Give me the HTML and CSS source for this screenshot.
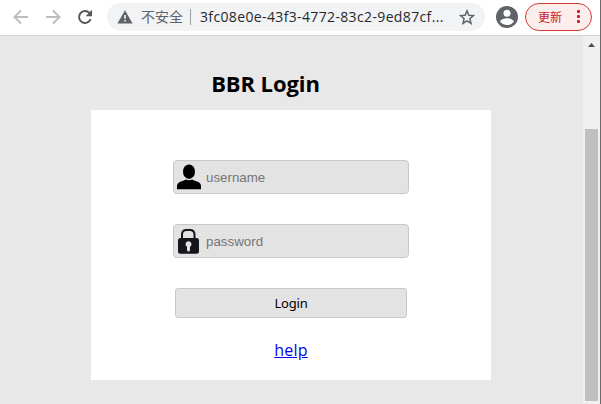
FILE: index.html
```html
<!DOCTYPE html>
<html lang="zh-CN">
<head>
<meta charset="utf-8">
<title>BBR Login</title>
<link rel="stylesheet" href="styles.css">
</head>
<body>
<div class="window">
  <header class="toolbar">
    <svg class="nav back" viewBox="0 0 16 16"><path d="M15 8H2M8 1.5 1.5 8 8 14.5"/></svg>
    <svg class="nav forward" viewBox="0 0 16 16"><path d="M1 8h13M8 1.5 14.5 8 8 14.5"/></svg>
    <svg class="nav reload" viewBox="0 0 16 16"><path d="M13.6 10.2A6 6 0 1 1 12.4 3.9L13.5 5"/><path class="tip" d="M15 .8v6.400H8.600z"/></svg>
    <div class="address">
      <svg class="warning" viewBox="0 0 16 14"><path d="M8 .3 15.6 13.5H.4z"/><path class="mark" d="M7.2 5h1.6v3.8H7.2zM7.2 10h1.6v1.6H7.2z"/></svg>
      <span class="insecure">不安全</span>
      <span class="divider"></span>
      <span class="url">3fc08e0e-43f3-4772-83c2-9ed87cf...</span>
      <svg class="star" viewBox="0 0 16 16"><path d="m8 1.8 1.8 4.4 4.7.4-3.6 3.1 1.1 4.6L8 11.8l-4 2.5 1.1-4.6-3.6-3.1 4.7-.4z"/></svg>
    </div>
    <svg class="avatar" viewBox="0 0 22 22"><circle class="disc" cx="11" cy="11" r="11"/><circle cx="11" cy="7.3" r="3.5"/><path d="M4 15.5c1-2.3 4.6-3.3 7-3.3s6 1 7 3.3c-1.6 2.2-4.2 3.6-7 3.6s-5.400-1.400-7-3.600z"/></svg>
    <div class="update"><span>更新</span><i class="dots"><b></b><b></b><b></b></i></div>
  </header>
  <div class="viewport">
    <main class="page">
      <h1>BBR Login</h1>
      <form class="card">
        <label class="field">
          <svg class="icon" viewBox="0 0 26 26"><ellipse cx="13" cy="7.700" rx="6" ry="7.200"/><path d="M1 25.300v-3.300c0-2.600 2-4 4.500-4.800 1.800-.5 3.200-1 4.300-1.700 2 1 4.400 1 6.400 0 1.100.7 2.500 1.200 4.300 1.700 2.500.8 4.500 2.200 4.500 4.800v3.300z"/></svg>
          <input type="text" placeholder="username">
        </label>
        <label class="field">
          <svg class="icon lock" viewBox="0 0 26 26"><path class="shackle" d="M6 10V6.500Q6 1.900 10.500 1.900h3.500Q18.500 1.900 18.500 6.500V10"/><rect x="2" y="10" width="21" height="15.800" rx="2.500"/><path class="keyhole" d="M12.500 13.200a3 3 0 0 0-1.500 5.600V22a1.500 1.500 0 0 0 3 0V18.800a3 3 0 0 0-1.500-5.600z"/></svg>
          <input type="password" placeholder="password">
        </label>
        <button type="button">Login</button>
        <a href="#">help</a>
      </form>
    </main>
    <aside class="scrollbar">
      <svg viewBox="0 0 7 4"><path d="M0 4 3.500 0 7 4z"/></svg>
      <div class="thumb"></div>
    </aside>
  </div>
</div>
</body>
</html>
```
FILE: styles.css
```css
* { box-sizing: border-box; }
body { margin: 0; overflow: hidden; font-family: "Open Sans", "Noto Sans CJK SC", sans-serif; }
.window { width: 601px; height: 404px; border-right: 1px solid #6b6b6b; background: #fff; display: flex; flex-direction: column; }
.toolbar { height: 36px; flex: none; border-bottom: 1px solid #d5d6d8; display: flex; align-items: center; padding: 0 8px 2px 13px; }
.nav { width: 16px; height: 16px; flex: none; margin-right: 16px; fill: none; stroke: #bcbec1; stroke-width: 2; }
.reload { stroke: #55595d; margin-right: 14px; }
.reload .tip { fill: #55595d; stroke: none; }
.address { width: 378px; height: 28px; flex: none; border-radius: 14px; background: #f1f3f4; display: flex; align-items: center; padding-left: 10px; white-space: nowrap; }
.warning { width: 16px; height: 14px; flex: none; fill: #5f6368; }
.warning .mark { fill: #f1f3f4; }
.insecure { width: 42px; margin-left: 8px; padding-bottom: 1px; font: 14px/20px "Noto Sans CJK SC", sans-serif; color: #5f6368; }
.divider { width: 1px; height: 16px; margin-left: 7px; background: #9b9ea2; }
.url { width: 245px; margin-left: 9px; font-size: 14px; line-height: 20px; letter-spacing: .36px; color: #27292d; }
.star { width: 16px; height: 16px; margin-left: 14px; fill: none; stroke: #5f6368; stroke-width: 1.5; }
.avatar { width: 22px; height: 22px; flex: none; margin-left: 11px; fill: #fff; }
.avatar .disc { fill: #5f6368; }
.update { width: 67px; height: 28px; flex: none; margin-left: 7px; border: 1px solid #d33b30; border-radius: 14px; background: #fceeed; color: #c5221f; display: flex; align-items: center; padding-left: 12px; font: 12px/18px "Noto Sans CJK SC", sans-serif; }
.dots { display: flex; flex-direction: column; gap: 2px; margin-left: 15px; }
.dots b { width: 3px; height: 3px; border-radius: 1px; background: #c5221f; }
.viewport { flex: 1; display: flex; }
.page { width: 583px; background: #e8e8e8; }
h1 { width: 349px; margin: 31px 0 11px 91px; text-align: center; font-size: 22px; line-height: 32px; font-weight: 700; letter-spacing: -.08px; color: #000; }
.card { width: 400px; height: 270px; margin-left: 91px; padding-top: 50px; background: #fff; display: flex; flex-direction: column; align-items: center; }
.field { width: 236px; height: 34px; margin-bottom: 30px; border: 1px solid #c8c8c8; border-radius: 4px; background: #e3e3e3; display: flex; align-items: center; padding-left: 2px; }
.icon { width: 26px; height: 26px; flex: none; fill: #000; }
.lock { fill: #15161b; }
.shackle { fill: none; stroke: #15161b; stroke-width: 2; }
.keyhole { fill: #e3e3e3; }
input { width: 190px; border: 0; padding: 2px 0 0; margin-left: 4px; background: transparent; font: 13.333px/16px "Liberation Sans", sans-serif; outline: 0; }
input::placeholder { color: #757575; }
button { width: 232px; height: 30px; border: 1px solid #c8c8c8; border-radius: 3px; background: #e3e3e3; color: #000; font: 13px/18px "Noto Sans", sans-serif; letter-spacing: -.2px; padding: 0; }
a { margin-top: 20px; font-size: 16px; line-height: 24px; letter-spacing: .2px; color: #0000ee; text-underline-offset: 1px; }
.scrollbar { width: 17px; background: #f0f0f0; display: flex; flex-direction: column; align-items: center; }
.scrollbar svg { width: 7px; height: 4px; margin-top: 7px; fill: #505050; }
.thumb { width: 13px; height: 272px; margin-top: 82px; background: #c0c0c0; }
```
